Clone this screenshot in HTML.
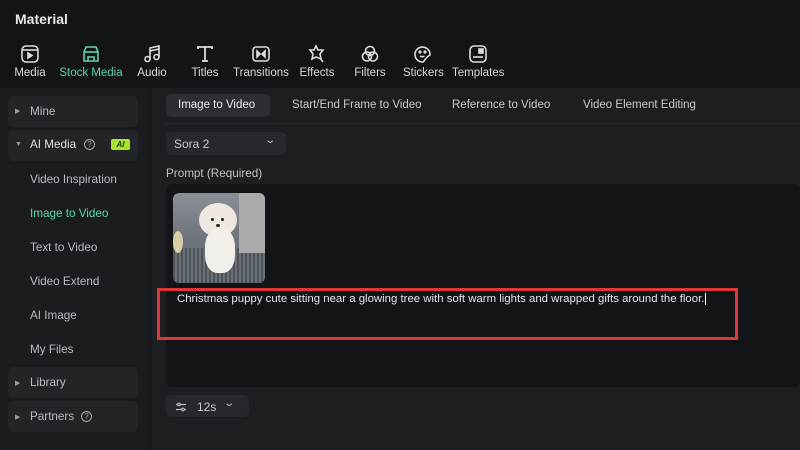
<!DOCTYPE html>
<html><head><meta charset="utf-8"><style>
*{margin:0;padding:0;box-sizing:border-box}
body{width:800px;height:450px;overflow:hidden;background:#17191d;font-family:"Liberation Sans",sans-serif;color:#d8dadd;position:relative}
.a{position:absolute;white-space:nowrap}
.top{left:0;top:0;width:800px;height:88px;background:#121418}
.title{left:15px;top:11px;font-size:14px;font-weight:bold;color:#e8e8e8}
.tb{top:44px;font-size:11.5px;color:#d6d8da;text-align:center}
.tb svg{display:block;margin:0 auto 3px}
.side{left:0;top:88px;width:150px;height:362px;background:#1a1c20}
.main{left:152px;top:88px;width:648px;height:362px;background:#1c1e22}
.box{background:#222428;border-radius:5px;left:8px;width:130px;height:31px}
.si{font-size:11.7px;color:#b9bcc0;left:30px}
.tri{font-size:7px;color:#999;left:15px}
.tab{top:99px;font-size:11.5px;color:#c8cacd}
</style></head><body>
<div class="a top"></div>
<div class="a title">Material</div>
<div class="a tb" style="left:13px;width:34px"><svg width="20" height="20" viewBox="0 0 20 20" fill="none" stroke="#ddd" stroke-width="1.6"><rect x="2" y="2" width="16" height="16" rx="4"/><path d="M2 6h16"/><path d="M8 9l4 2.5-4 2.5z" fill="#ddd"/></svg>Media</div>
<div class="a tb" style="left:57px;width:68px;color:#5fd3ad"><svg width="20" height="20" viewBox="0 0 20 20" fill="none" stroke="#5fd3ad" stroke-width="1.6"><path d="M3 8l2-5h10l2 5v9H3z"/><path d="M3 8h14"/><path d="M7 17v-4h6v4"/></svg>Stock Media</div>
<div class="a tb" style="left:135px;width:34px"><svg width="20" height="20" viewBox="0 0 20 20" fill="none" stroke="#ddd" stroke-width="1.6"><path d="M8 15V4l9-2v11"/><circle cx="5.5" cy="15" r="2.5"/><circle cx="14.5" cy="13" r="2.5"/><path d="M8 7l9-2"/></svg>Audio</div>
<div class="a tb" style="left:188px;width:34px"><svg width="20" height="20" viewBox="0 0 20 20" fill="none" stroke="#ddd" stroke-width="1.8"><path d="M3 5V3h14v2M10 3v14M7 17h6"/></svg>Titles</div>
<div class="a tb" style="left:233px;width:56px"><svg width="20" height="20" viewBox="0 0 20 20" fill="none" stroke="#ddd" stroke-width="1.6"><rect x="2" y="3" width="16" height="14" rx="3"/><path d="M6 7l3 3-3 3zM14 7l-3 3 3 3z" fill="#ddd"/></svg>Transitions</div>
<div class="a tb" style="left:299px;width:36px"><svg width="20" height="20" viewBox="0 0 20 20" fill="none" stroke="#ddd" stroke-width="1.6"><path d="M9 2l2 4 5 0-3 4 1 5-5-2-4 2 1-5-3-4 4 0z"/><path d="M13 14l3 4"/></svg>Effects</div>
<div class="a tb" style="left:352px;width:36px"><svg width="20" height="20" viewBox="0 0 20 20" fill="none" stroke="#ddd" stroke-width="1.6"><circle cx="10" cy="7" r="4.5"/><circle cx="7" cy="12.5" r="4.5"/><circle cx="13" cy="12.5" r="4.5"/></svg>Filters</div>
<div class="a tb" style="left:403px;width:40px"><svg width="20" height="20" viewBox="0 0 20 20" fill="none" stroke="#ddd" stroke-width="1.6"><path d="M17 11A7.5 7.5 0 1 0 10 18c1 0 2-4 7-7z"/><circle cx="7" cy="8" r=".8" fill="#ddd"/><circle cx="12" cy="8" r=".8" fill="#ddd"/><path d="M7 12c1.5 1 3 1 4.5 0"/></svg>Stickers</div>
<div class="a tb" style="left:452px;width:52px"><svg width="20" height="20" viewBox="0 0 20 20" fill="none" stroke="#ddd" stroke-width="1.6"><rect x="2" y="2" width="16" height="16" rx="4"/><path d="M5 13h10"/><rect x="11" y="5" width="4" height="4" fill="#ddd"/></svg>Templates</div>

<div class="a side"></div>
<div class="a main"></div>
<div class="a box" style="top:96px"></div>
<div class="a tri" style="top:107px">▶</div><div class="a si" style="top:105px">Mine</div>
<div class="a box" style="top:130px"></div>
<div class="a tri" style="top:141px">▼</div><div class="a si" style="top:138px;color:#dfe1e3">AI Media</div>
<div class="a" style="left:84px;top:139px;width:11px;height:11px;border:1.3px solid #aaa;border-radius:50%;font-size:8px;text-align:center;line-height:9px;color:#aaa">?</div>
<div class="a" style="left:111px;top:139px;width:19px;height:11px;background:#a6e22e;border-radius:2px;font-size:8px;font-weight:bold;font-style:italic;color:#1a3a00;text-align:center;line-height:11px">AI</div>
<div class="a si" style="top:173px">Video Inspiration</div>
<div class="a si" style="top:207px;color:#5fd3ad">Image to Video</div>
<div class="a si" style="top:241px">Text to Video</div>
<div class="a si" style="top:275px">Video Extend</div>
<div class="a si" style="top:309px">AI Image</div>
<div class="a si" style="top:343px">My Files</div>
<div class="a box" style="top:367px"></div>
<div class="a tri" style="top:379px">▶</div><div class="a si" style="top:376px">Library</div>
<div class="a box" style="top:401px"></div>
<div class="a tri" style="top:413px">▶</div><div class="a si" style="top:410px">Partners</div>
<div class="a" style="left:81px;top:411px;width:11px;height:11px;border:1.3px solid #aaa;border-radius:50%;font-size:8px;text-align:center;line-height:9px;color:#aaa">?</div>

<div class="a" style="left:166px;top:94px;width:104px;height:23px;background:#2b2e33;border-radius:5px"></div>
<div class="a tab" style="left:178px;color:#eee">Image to Video</div>
<div class="a tab" style="left:292px">Start/End Frame to Video</div>
<div class="a tab" style="left:452px">Reference to Video</div>
<div class="a tab" style="left:583px">Video Element Editing</div>
<div class="a" style="left:166px;top:123px;width:634px;height:1px;background:#2a2c31"></div>
<div class="a" style="left:166px;top:132px;width:120px;height:23px;background:#25282c;border-radius:5px"></div>
<div class="a" style="left:174px;top:137px;font-size:12px;color:#c8cacd">Sora 2</div>
<div class="a" style="left:266px;top:135px;font-size:10px;color:#bbb;transform:scaleX(1.4)">⌄</div>
<div class="a" style="left:166px;top:167px;font-size:11.7px;color:#c0c3c6">Prompt (Required)</div>
<div class="a" style="left:166px;top:184px;width:634px;height:203px;background:#121417;border-radius:6px"></div>
<div class="a" style="left:173px;top:193px;width:92px;height:90px;border-radius:6px;background:linear-gradient(180deg,#8b9096 0%,#6f757c 50%,#5c6168 100%);overflow:hidden">
 <div class="a" style="left:0;top:55px;width:92px;height:35px;background:repeating-linear-gradient(90deg,#4e535a 0 2px,#6a7078 2px 4px)"></div>
 <div class="a" style="left:66px;top:0;width:26px;height:60px;background:#a9abaa"></div>
 <div class="a" style="left:0;top:38px;width:10px;height:22px;background:#d8cfa8;border-radius:50%"></div>
 <div class="a" style="left:26px;top:10px;width:38px;height:34px;background:#eee8e0;border-radius:50%"></div>
 <div class="a" style="left:32px;top:36px;width:30px;height:44px;background:#f2efea;border-radius:40%"></div>
 <div class="a" style="left:38px;top:25px;width:3px;height:3px;background:#222;border-radius:50%"></div>
 <div class="a" style="left:48px;top:25px;width:3px;height:3px;background:#222;border-radius:50%"></div>
 <div class="a" style="left:43px;top:31px;width:4px;height:3px;background:#222;border-radius:50%"></div>
</div>
<div class="a" style="left:157px;top:288px;width:581px;height:52px;border:3px solid #e0353a"></div>
<div class="a" style="left:177px;top:293px;font-size:11.4px;color:#e6e6e6">Christmas puppy cute sitting near a glowing tree with soft warm lights and wrapped gifts around the floor.<span style="border-left:1px solid #fff;margin-left:1px"></span></div>
<div class="a" style="left:166px;top:395px;width:83px;height:22px;background:#25282c;border-radius:5px"></div>
<div class="a" style="left:175px;top:400px"><svg width="12" height="12" viewBox="0 0 12 12" fill="none" stroke="#bbb" stroke-width="1.2"><path d="M1 3.5h10M1 8.5h10"/><circle cx="4" cy="3.5" r="1.3" fill="#25282c"/><circle cx="8" cy="8.5" r="1.3" fill="#25282c"/></svg></div>
<div class="a" style="left:197px;top:400px;font-size:12px;color:#c8cacd">12s</div>
<div class="a" style="left:225px;top:398px;font-size:10px;color:#bbb;transform:scaleX(1.4)">⌄</div>
</body></html>
